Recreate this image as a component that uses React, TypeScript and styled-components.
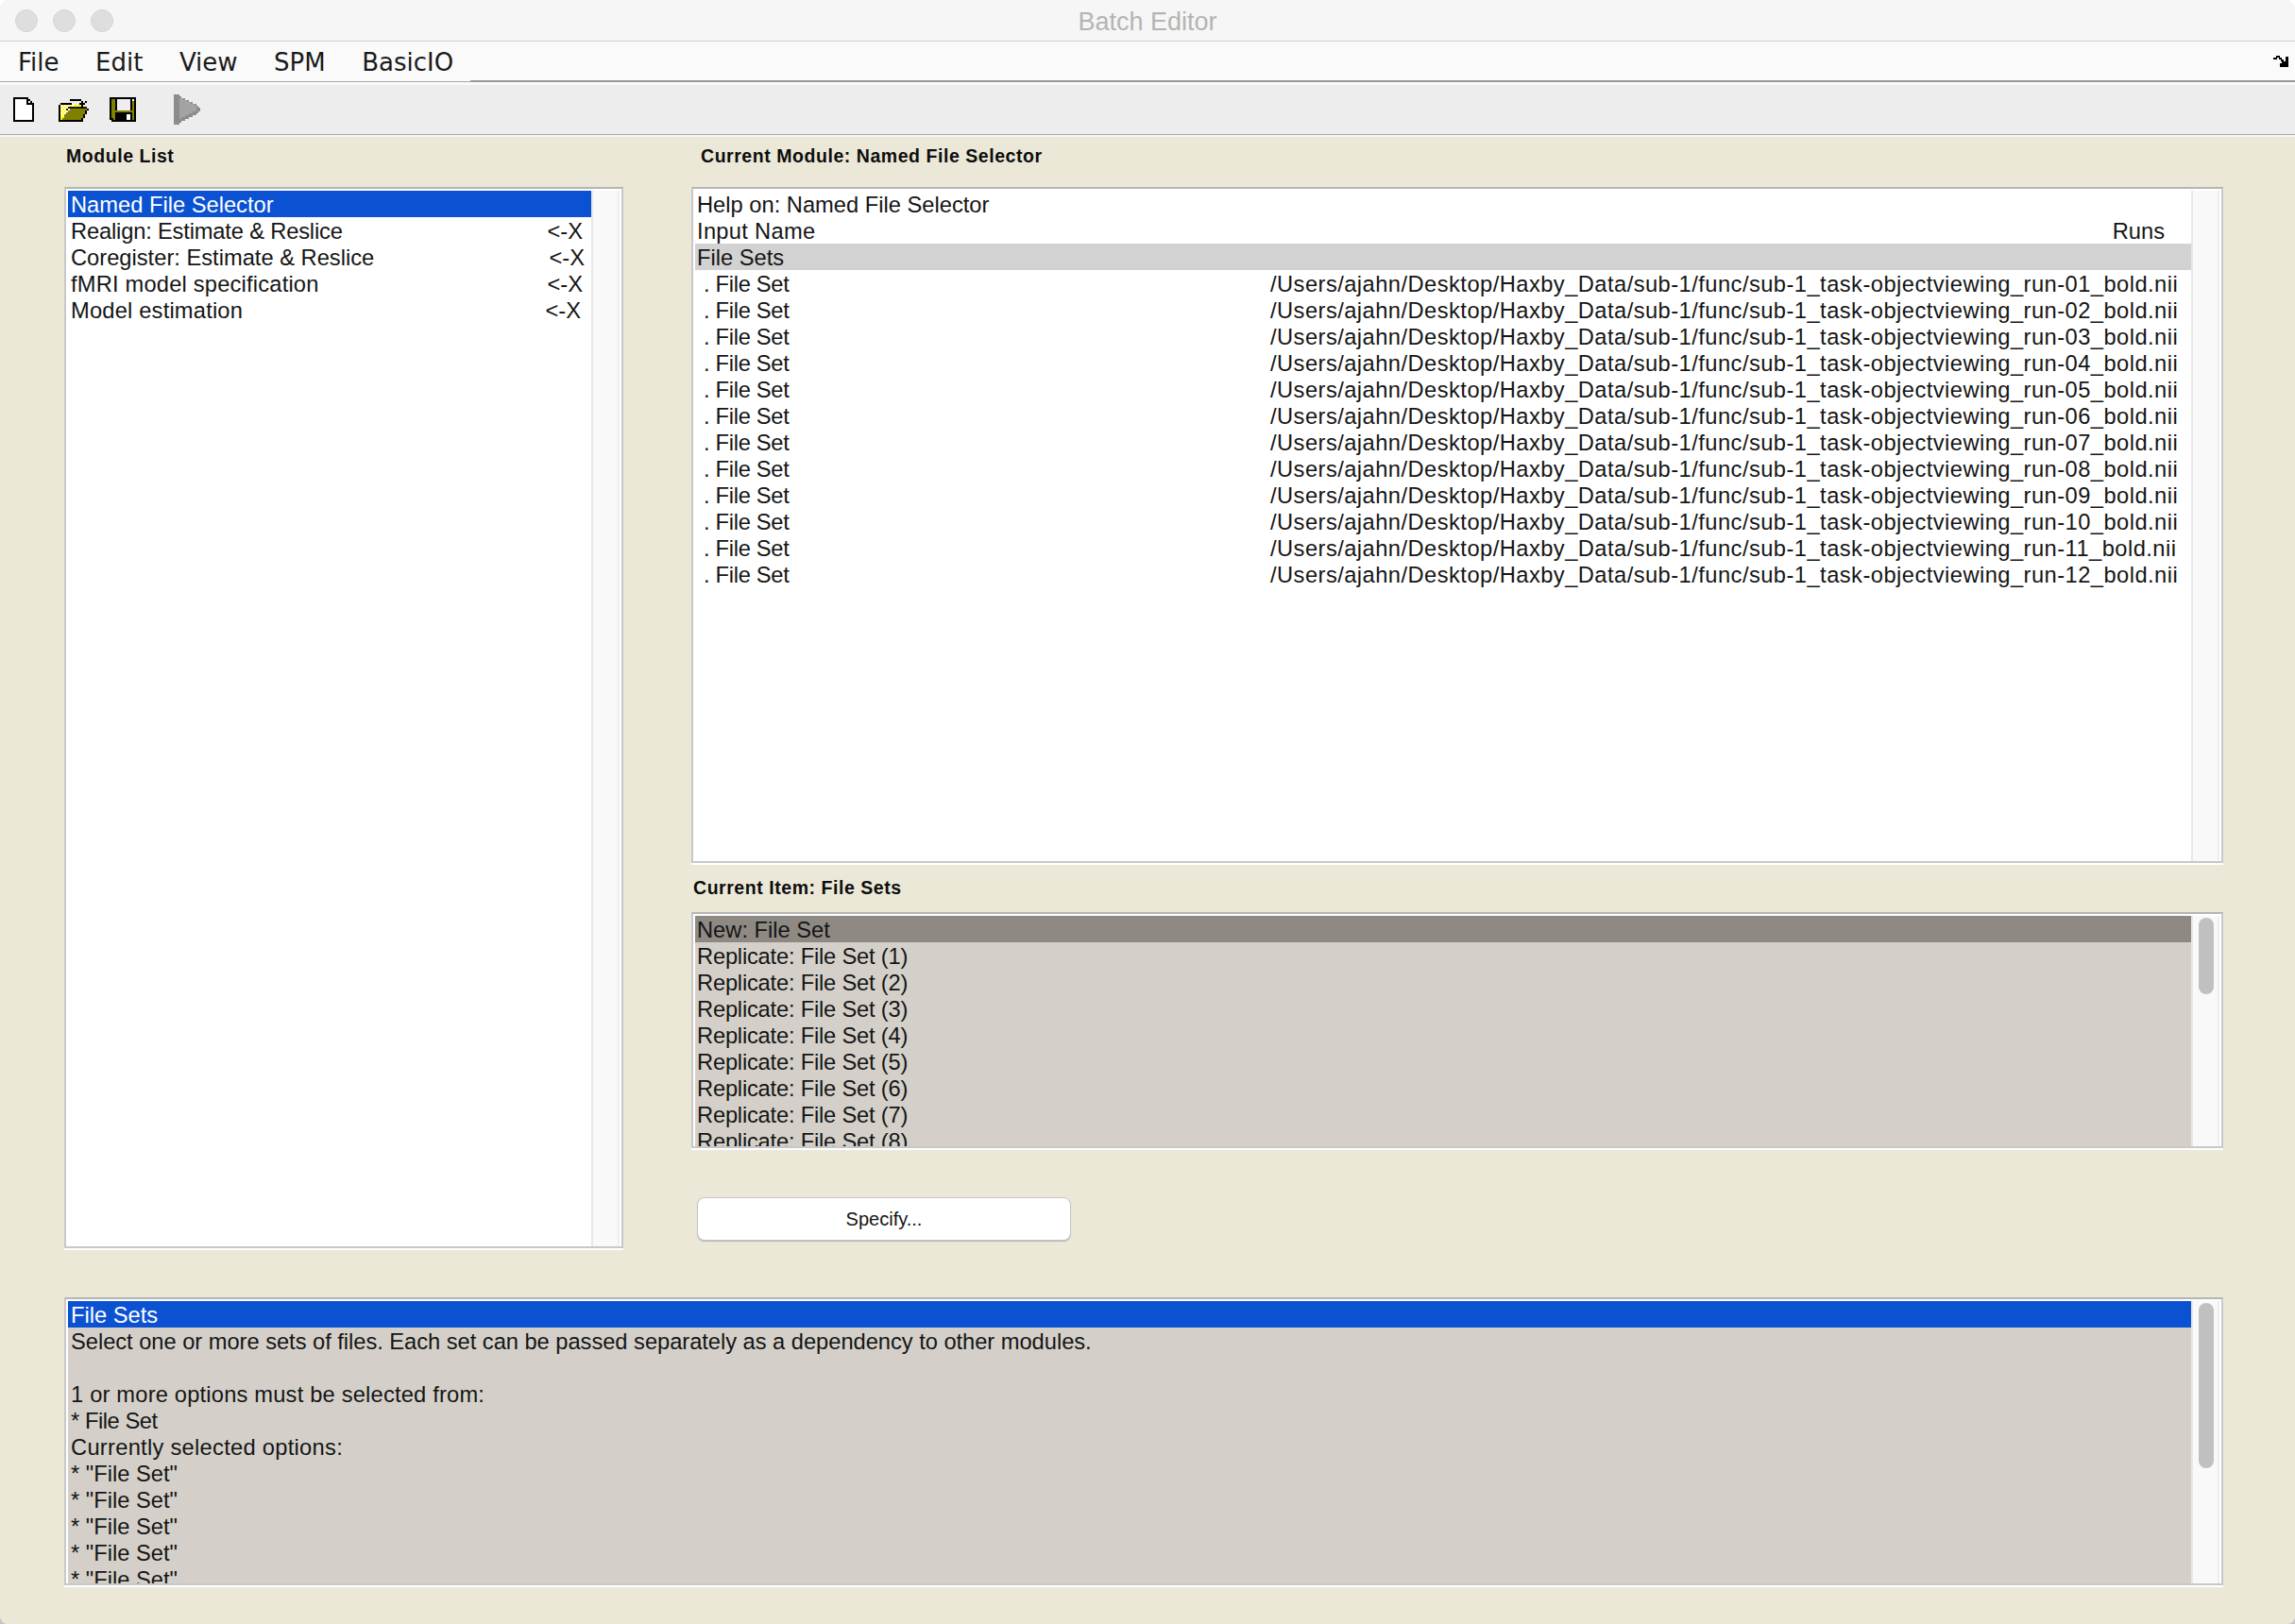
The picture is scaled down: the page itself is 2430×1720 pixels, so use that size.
import styled, { createGlobalStyle } from "styled-components";

const GlobalStyle = createGlobalStyle`
  html, body { margin: 0; padding: 0; }
  body {
    width: 2430px;
    height: 1720px;
    overflow: hidden;
    background: linear-gradient(#fff 50%, #c4c4c4 50%);
    font-family: "Liberation Sans", Arial, sans-serif;
    color: #111;
  }
`;

const Window = styled.div`
  width: 2430px;
  height: 1720px;
  display: flex;
  flex-direction: column;
  background: #ebe8d8;
  border-radius: 11px 11px 8px 8px;
  overflow: hidden;
`;

const TitleBar = styled.div`
  position: relative;
  height: 44px;
  flex: none;
  display: flex;
  align-items: center;
  justify-content: center;
  padding-top: 3px;
  box-sizing: border-box;
  background: #f6f6f6;
  border-bottom: 1px solid #cfcfcf;
  color: #b4b4b4;
  font-size: 27px;
`;

const Lights = styled.div`
  position: absolute;
  left: 16px;
  top: 10px;
  display: flex;
  gap: 16px;
`;

const Light = styled.span`
  width: 24px;
  height: 24px;
  box-sizing: border-box;
  border-radius: 50%;
  background: #dedede;
  border: 1px solid #d4d4d4;
`;

const MenuBar = styled.div`
  height: 41px;
  flex: none;
  box-sizing: border-box;
  display: flex;
  align-items: center;
  gap: 38.5px;
  padding: 0 6px 0 19px;
  background: #fafafa;
  font-family: "DejaVu Sans", sans-serif;
  font-size: 26px;
  color: #1a1a1a;
`;

const MenuItem = styled.span`
  line-height: 45px;
  height: 41px;
`;

const ResizeIcon = styled.svg`
  margin-left: auto;
`;

const MenuRule = styled.div`
  flex: none;
  display: flex;
  align-items: flex-start;
  height: 5px;
  background: #fafafa;
`;

const RuleSegment = styled.div<{ $wide?: boolean }>`
  flex: ${(p) => (p.$wide ? "1" : "none")};
  width: ${(p) => (p.$wide ? "auto" : "498px")};
  height: ${(p) => (p.$wide ? 2 : 1)}px;
  margin-top: ${(p) => (p.$wide ? 0 : 1)}px;
  background: ${(p) => (p.$wide ? "#999" : "#a6a6a6")};
`;

const ToolBar = styled.div`
  height: 53px;
  flex: none;
  box-sizing: border-box;
  display: flex;
  align-items: center;
  padding-left: 14px;
  background: #ededed;
  border-bottom: 1px solid #a9a9a9;
`;

const ToolIcon = styled.svg<{ $gap?: number }>`
  flex: none;
  margin-right: ${(p) => p.$gap ?? 0}px;
  shape-rendering: crispEdges;
`;

const ToolShadow = styled.div`
  height: 2px;
  flex: none;
  background: #f6f5ee;
`;

const Workspace = styled.div`
  flex: none;
  display: grid;
  grid-template-columns: 592px 1622px;
  column-gap: 72px;
  padding: 0 0 0 68px;
`;

const Column = styled.div`
  display: flex;
  flex-direction: column;
`;

const Heading = styled.div<{ $height: number; $indent?: number; $raise?: number }>`
  height: ${(p) => p.$height}px;
  box-sizing: border-box;
  padding-left: ${(p) => p.$indent ?? 0}px;
  padding-bottom: ${(p) => p.$raise ?? 0}px;
  display: flex;
  align-items: center;
  font-size: 19.5px;
  font-weight: 700;
  letter-spacing: 0.55px;
  color: #0d0d0d;
`;

const Panel = styled.div<{ $height: number }>`
  height: ${(p) => p.$height}px;
  box-sizing: border-box;
  display: flex;
  flex: none;
  background: #fff;
  padding: 2px 2px 0;
  border: 2px solid #c8c8c8;
  border-top-color: #b5b5b5;
  box-shadow: 0 2px 0 #fff;
`;

const ListBody = styled.div<{ $fill?: boolean; $inset?: number }>`
  flex: 1;
  min-width: 0;
  overflow: hidden;
  background: ${(p) => (p.$fill ? "#d4d0c9" : "#fff")};
  font-size: 23.7px;
  --row-inset: ${(p) => p.$inset ?? 3}px;
`;

const Row = styled.div<{ $tone?: "selected" | "current" | "group"; $track?: number }>`
  height: 28px;
  line-height: 31px;
  padding: 0 28px 0 var(--row-inset);
  display: flex;
  white-space: pre;
  letter-spacing: ${(p) => p.$track ?? 0}px;
  color: ${(p) => (p.$tone === "selected" ? "#fff" : "#151515")};
  background: ${(p) =>
    p.$tone === "selected"
      ? "#0a52d2"
      : p.$tone === "current"
        ? "#8e8a83"
        : p.$tone === "group"
          ? "#d2d2d2"
          : "transparent"};
`;

const Push = styled.span<{ $right: number }>`
  margin-left: auto;
  margin-right: ${(p) => p.$right}px;
  letter-spacing: 0;
`;

const SetName = styled.span`
  width: 607px;
  flex: none;
  padding-left: 7px;
  box-sizing: border-box;
  letter-spacing: -0.3px;
`;

const SetPath = styled.span`
  letter-spacing: 0.46px;
`;

const ScrollTrack = styled.div`
  width: 30px;
  flex: none;
  box-sizing: border-box;
  padding: 2px 6px 0 6px;
  background: #f9f9f9;
  border-left: 2px solid #e8e8e8;
  border-right: 2px solid #eeeeee;
`;

const ScrollThumb = styled.div<{ $height: number }>`
  width: 16px;
  height: ${(p) => p.$height}px;
  border-radius: 8px;
  background: #c0c0c0;
`;

const ButtonRow = styled.div`
  padding: 52px 0 0 6px;
`;

const Button = styled.button`
  display: block;
  width: 396px;
  height: 46px;
  padding: 0;
  background: #fff;
  border: 1px solid #c6c6c6;
  border-radius: 8px;
  box-shadow: 0 1px 1px #b4b4b4;
  font-family: "Liberation Sans", Arial, sans-serif;
  font-size: 20px;
  color: #151515;
`;

const BottomWrap = styled.div`
  flex: none;
  padding: 52px 0 0 68px;
  width: 2286px;
`;

const modules: [string, number, number][] = [
  ["Realign: Estimate & Reslice", 2, -0.17],
  ["Coregister: Estimate & Reslice", 0, 0],
  ["fMRI model specification", 2, 0.19],
  ["Model estimation", 4, 0.19],
];

const runs = ["01", "02", "03", "04", "05", "06", "07", "08", "09", "10", "11", "12"];

const helpLines: [string, number][] = [
  ["Select one or more sets of files. Each set can be passed separately as a dependency to other modules.", -0.03],
  [" ", 0],
  ["1 or more options must be selected from:", 0.19],
  ["* File Set", -0.45],
  ["Currently selected options:", 0.28],
  ['* "File Set"', 0],
  ['* "File Set"', 0],
  ['* "File Set"', 0],
  ['* "File Set"', 0],
  ['* "File Set"', 0],
];

const PageIcon = () => (
  <ToolIcon width="22" height="26" viewBox="0 0 22 26" $gap={26}>
    <path fill="#000" d="M0 0h16v2h2v2h2v2h2v20H0z" />
    <path fill="#fff" d="M2 2h12v6h6v16H2z" />
    <path fill="#fff" d="M16 4h2v2h-2z" />
  </ToolIcon>
);

const dither = Array.from({ length: 6 }).flatMap((_, y) =>
  Array.from({ length: 8 }).map((_, x) => ({ x, y })),
);

const FolderIcon = () => (
  <ToolIcon width="32" height="26" viewBox="0 0 32 26" $gap={22}>
    <path fill="#000" d="M12 2h10v2h-10zM22 2h2v2h2v2h2v-2h2v2h-2v2h-2v2h-2V8h-2V6h2V4h-2zM0 8h2V6h12v2h12v4h6v2h-2v4h-2v4h-2v4H0z" />
    <rect x="2" y="8" width="22" height="16" fill="#ffff00" />
    {dither.map(({ x, y }) =>
      (x + y) % 2 === 0 ? (
        <rect key={`${x}-${y}`} x={2 + x * 2} y={8 + y * 2} width="2" height="2" fill="#fff" />
      ) : null,
    )}
    <path fill="#808000" d="M4 24v-2h2v-4h2v-2h2v-2h2v-2h18v2h-2v4h-2v4h-2v2z" />
    <path fill="#000" d="M8 12h2v2H8zM10 10h20v2H10z" opacity="0.9" />
  </ToolIcon>
);

const SaveIcon = () => (
  <ToolIcon width="28" height="26" viewBox="0 0 28 26" $gap={40}>
    <path fill="#000" d="M0 0h28v26H2v-2H0z" />
    <path fill="#808000" d="M2 2h24v22H4v-2H2z" />
    <rect x="6" y="2" width="18" height="12" fill="#000" />
    <rect x="8" y="2" width="14" height="12" fill="#eeeeee" />
    <rect x="24" y="2" width="2" height="2" fill="#fff" />
    <rect x="6" y="16" width="18" height="10" fill="#000" />
    <rect x="18" y="18" width="4" height="6" fill="#fff" />
  </ToolIcon>
);

const RunIcon = () => (
  <ToolIcon width="28" height="32" viewBox="0 0 28 32">
    <path fill="#8c8c8c" d="M0 0h6v2h2v2h4v2h4v2h4v2h4v2h2v2h2v4h-2v2h-2v2h-4v2h-4v2h-4v2H8v2H6v2H0z" />
    <path fill="#a3a3a3" d="M6 4h4v2h4v2h4v2h4v2h2v6h-4v2h-4v2h-4v2h-4v2H6z" />
  </ToolIcon>
);

export default function App() {
  return (
    <>
      <GlobalStyle />
      <Window>
        <TitleBar>
          <Lights>
            <Light />
            <Light />
            <Light />
          </Lights>
          Batch Editor
        </TitleBar>
        <MenuBar>
          <MenuItem>File</MenuItem>
          <MenuItem>Edit</MenuItem>
          <MenuItem>View</MenuItem>
          <MenuItem>SPM</MenuItem>
          <MenuItem>BasicIO</MenuItem>
          <ResizeIcon width="17" height="12" viewBox="0 0 17 12">
            <path
              fill="#000"
              shapeRendering="crispEdges"
              d="M0 2h4v2H0zM3 0h4v2H3zM6 2h3v2H6zM8 4h3v2H8zM13 1h3v11h-3zM7 8h9v4H7zM9 6h7v2H9z"
            />
          </ResizeIcon>
        </MenuBar>
        <MenuRule>
          <RuleSegment />
          <RuleSegment $wide />
        </MenuRule>
        <ToolBar>
          <PageIcon />
          <FolderIcon />
          <SaveIcon />
          <RunIcon />
        </ToolBar>
        <ToolShadow />
        <Workspace>
          <Column>
            <Heading $height={53} $indent={2} $raise={13}>
              Module List
            </Heading>
            <Panel $height={1124}>
              <ListBody>
                <Row $tone="selected">Named File Selector</Row>
                {modules.map(([name, offset, track]) => (
                  <Row key={name} $track={track}>
                    {name}
                    <Push $right={offset - 21}>{"<-X"}</Push>
                  </Row>
                ))}
              </ListBody>
              <ScrollTrack />
            </Panel>
          </Column>
          <Column>
            <Heading $height={53} $indent={10} $raise={13}>
              Current Module: Named File Selector
            </Heading>
            <Panel $height={716}>
              <ListBody $inset={2}>
                <Row>Help on: Named File Selector</Row>
                <Row $track={0.3}>
                  Input Name
                  <Push $right={0}>Runs</Push>
                </Row>
                <Row $tone="group">File Sets</Row>
                {runs.map((run) => (
                  <Row key={run}>
                    <SetName>. File Set</SetName>
                    <SetPath>{`/Users/ajahn/Desktop/Haxby_Data/sub-1/func/sub-1_task-objectviewing_run-${run}_bold.nii`}</SetPath>
                  </Row>
                ))}
              </ListBody>
              <ScrollTrack />
            </Panel>
            <Heading $height={52} $indent={2}>
              Current Item: File Sets
            </Heading>
            <Panel $height={250}>
              <ListBody $fill $inset={2}>
                <Row $tone="current">New: File Set</Row>
                {[1, 2, 3, 4, 5, 6, 7, 8].map((n) => (
                  <Row key={n} $track={-0.2}>{`Replicate: File Set (${n})`}</Row>
                ))}
              </ListBody>
              <ScrollTrack>
                <ScrollThumb $height={81} />
              </ScrollTrack>
            </Panel>
            <ButtonRow>
              <Button>Specify...</Button>
            </ButtonRow>
          </Column>
        </Workspace>
        <BottomWrap>
          <Panel $height={305}>
            <ListBody $fill>
              <Row $tone="selected">File Sets</Row>
              {helpLines.map(([line, track], i) => (
                <Row key={i} $track={track}>
                  {line}
                </Row>
              ))}
            </ListBody>
            <ScrollTrack>
              <ScrollThumb $height={175} />
            </ScrollTrack>
          </Panel>
        </BottomWrap>
      </Window>
    </>
  );
}
